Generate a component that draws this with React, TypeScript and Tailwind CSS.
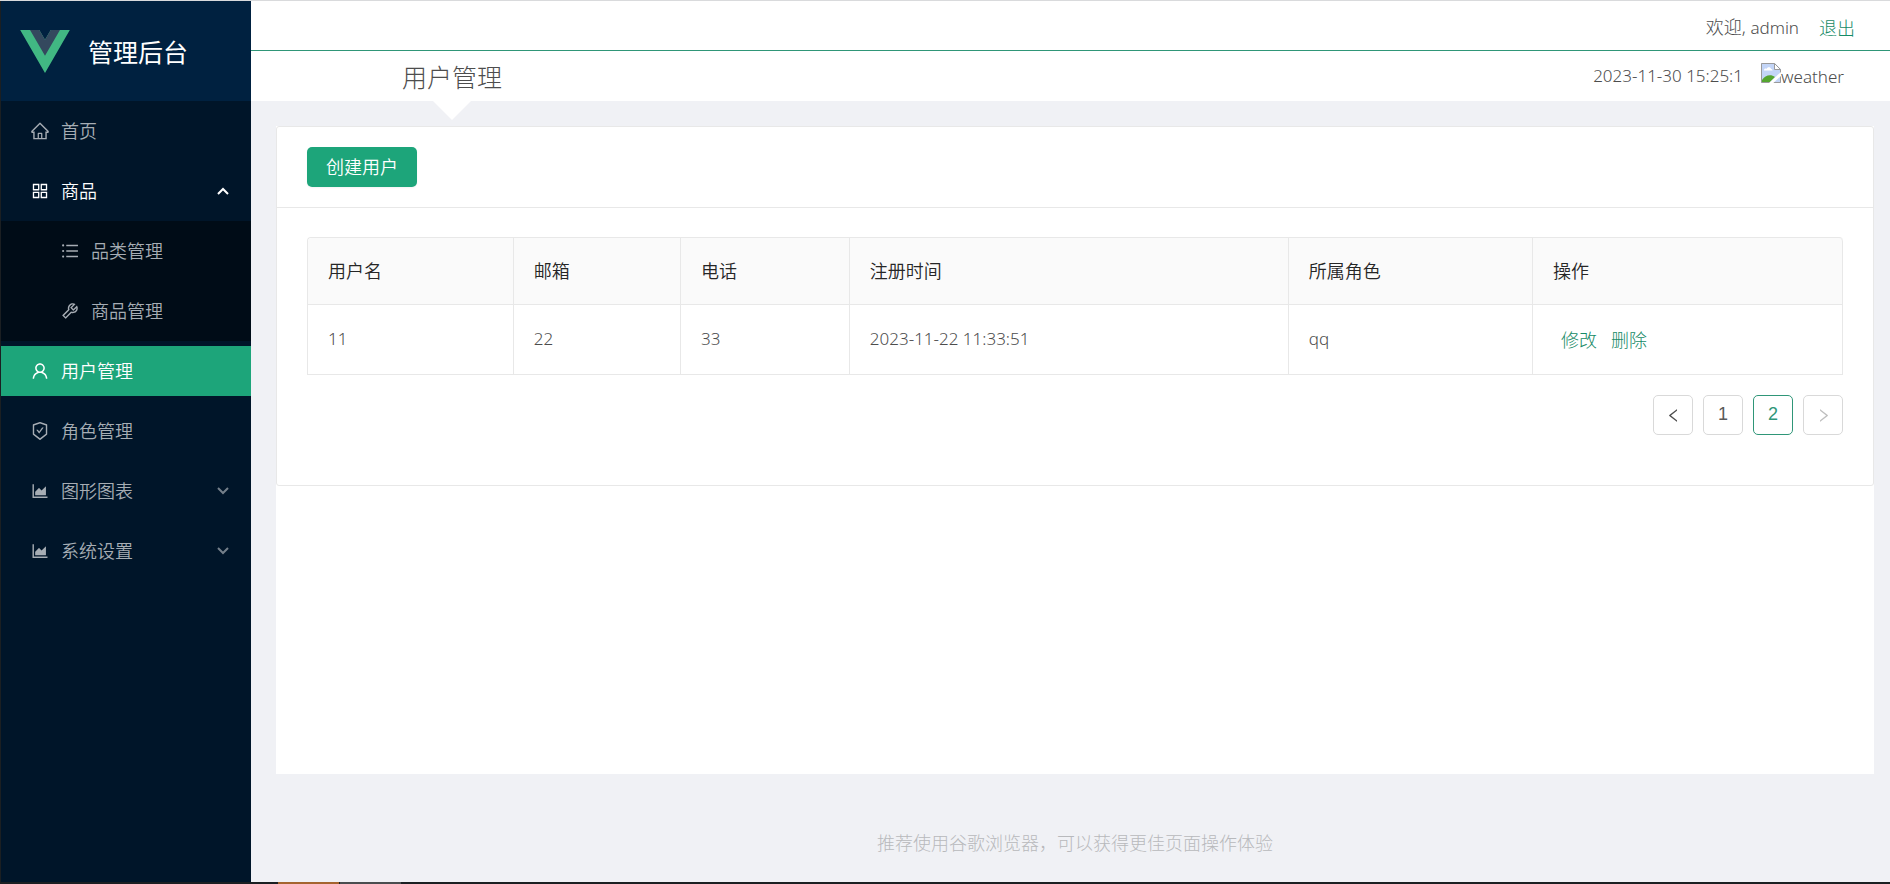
import { FC, ReactNode } from "react";
import {
  AiOutlineAppstore,
  AiOutlineAreaChart,
  AiOutlineHome,
  AiOutlineLeft,
  AiOutlineRight,
  AiOutlineSafetyCertificate,
  AiOutlineTool,
  AiOutlineUnorderedList,
  AiOutlineUser,
} from "react-icons/ai";
import clsx from "clsx";

const columns = [
  { title: "用户名", width: "w-[13.4%]" },
  { title: "邮箱", width: "w-[10.9%]" },
  { title: "电话", width: "w-[11%]" },
  { title: "注册时间", width: "w-[28.6%]" },
  { title: "所属角色", width: "w-[15.9%]" },
  { title: "操作", width: "w-[20.2%]" },
];

const users = [
  { name: "11", email: "22", phone: "33", createdAt: "2023-11-22 11:33:51", role: "qq" },
];

const Logo: FC = () => (
  <svg viewBox="0 0 262 227" className="h-[43px] w-[50px]" aria-hidden="true">
    <path fill="#41b883" d="M161 0l-30 52L101 0H0l131 227L262 0z" />
    <path fill="#34495e" d="M161 0l-30 52L101 0H52l79 136L210 0z" />
  </svg>
);

const Arrow: FC<{ open?: boolean }> = ({ open }) => (
  <svg
    viewBox="0 0 12 8"
    className={clsx("ml-auto h-2 w-3", !open && "rotate-180 opacity-70")}
    fill="none"
    stroke="currentColor"
    strokeWidth="2"
    aria-hidden="true"
  >
    <path d="M1 7l5-5 5 5" />
  </svg>
);

const BrokenImage: FC = () => (
  <svg viewBox="0 0 40 40" className="size-5" aria-hidden="true">
    <path fill="#c3d5f7" d="M0 0h28l12 12v28H0z" />
    <path fill="#fff" d="M6 15c0-4 3-5 5-3 1-5 9-5 9 0 2 0 3 1 3 3z" />
    <path fill="#55a630" d="M2 38v-4c6-10 18-12 26-6L18 38z" />
    <path fill="#fff" d="M28 0v12h12z" />
    <path fill="none" stroke="#9a9a9a" strokeWidth="2" d="M1 39V1h26l12 12v26H1M27 1v12h12" />
    <path stroke="#fff" strokeWidth="6" d="M18 42L42 20" />
  </svg>
);

type MenuItemProps = {
  icon: ReactNode;
  label: string;
  active?: boolean;
  nested?: boolean;
  open?: boolean;
};

const MenuItem: FC<MenuItemProps> = ({ icon, label, active, nested, open }) => (
  <li className="py-[5px]">
    <a
      href="#"
      className={clsx(
        "flex h-[50px] items-center gap-[11px] pr-[22px]",
        nested ? "pl-[59px]" : "pl-[29px]",
        active && "bg-[#1da57a]",
        active || open ? "text-white" : "text-[#a6adb4]"
      )}
    >
      <span className="text-xl">{icon}</span>
      <span>{label}</span>
      {open !== undefined && <Arrow open={open} />}
    </a>
  </li>
);

const Sidebar: FC = () => (
  <aside className="w-[251px] shrink-0 border-l border-[#1b1f22] bg-[#001529] font-[350]">
    <div className="flex h-[100px] items-center gap-[18px] bg-[#002140] pl-[19px] text-white">
      <Logo />
      <h1 className="pt-[2px] text-[25px] font-normal">管理后台</h1>
    </div>
    <nav>
      <ul>
        <MenuItem icon={<AiOutlineHome />} label="首页" />
        <MenuItem icon={<AiOutlineAppstore />} label="商品" open />
        <li className="bg-[#000c17]">
          <ul>
            <MenuItem icon={<AiOutlineUnorderedList />} label="品类管理" nested />
            <MenuItem icon={<AiOutlineTool />} label="商品管理" nested />
          </ul>
        </li>
        <MenuItem icon={<AiOutlineUser />} label="用户管理" active />
        <MenuItem icon={<AiOutlineSafetyCertificate />} label="角色管理" />
        <MenuItem icon={<AiOutlineAreaChart />} label="图形图表" open={false} />
        <MenuItem icon={<AiOutlineAreaChart />} label="系统设置" open={false} />
      </ul>
    </nav>
  </aside>
);

const Header: FC = () => (
  <header className="bg-white">
    <div className="flex h-[50px] items-center justify-end gap-5 border-b border-[#2f9678] pt-1 pr-[35px]">
      <span>
        欢迎, <span className="text-[17px]">admin</span>
      </span>
      <a href="#" className="text-[#168a66]">
        退出
      </a>
    </div>
    <div className="flex h-[50px] items-center justify-between pr-[46px]">
      <div className="relative flex h-full w-1/4 items-center justify-center pl-1">
        <h2 className="pt-[2px] text-[25px]">用户管理</h2>
        <span className="absolute top-full border-x-[19px] border-t-[19px] border-x-transparent border-t-white" />
      </div>
      <div className="flex items-center gap-[18px] text-[17px]">
        <time>2023-11-30 15:25:1</time>
        <span className="flex items-baseline pt-[2px]">
          <BrokenImage />
          weather
        </span>
      </div>
    </div>
  </header>
);

const UserTable: FC = () => (
  <table className="w-full table-fixed border-separate border-spacing-0 rounded-t border-t border-l border-[#e8e8e8] text-left">
    <thead>
      <tr className="h-[67px] text-[#262626]">
        {columns.map(({ title, width }) => (
          <th
            key={title}
            className={clsx(
              "border-r border-b border-[#e8e8e8] bg-[#fafafa] px-5 font-[350] first:rounded-tl last:rounded-tr",
              width
            )}
          >
            {title}
          </th>
        ))}
      </tr>
    </thead>
    <tbody>
      {users.map((user) => (
        <tr key={user.name} className="h-[70px]">
          {[user.name, user.email, user.phone, user.createdAt, user.role].map((value) => (
            <td key={value} className="border-r border-b border-[#e8e8e8] px-5 text-[17px]">
              {value}
            </td>
          ))}
          <td className="border-r border-b border-[#e8e8e8] px-7">
            <div className="flex gap-[14px] text-[#168a66]">
              <button type="button">修改</button>
              <button type="button">删除</button>
            </div>
          </td>
        </tr>
      ))}
    </tbody>
  </table>
);

const pageButton =
  "flex size-10 items-center justify-center rounded-[5px] border bg-white font-['Liberation_Sans',sans-serif] font-normal";

const Pagination: FC = () => (
  <nav className="mt-5 flex justify-end gap-[10px]">
    <button type="button" aria-label="上一页" className={clsx(pageButton, "border-[#d9d9d9]")}>
      <AiOutlineLeft className="size-[17px]" />
    </button>
    <button type="button" className={clsx(pageButton, "border-[#d9d9d9] pb-[2px] text-[#595959]")}>
      1
    </button>
    <button type="button" className={clsx(pageButton, "border-[#2f9678] pb-[2px] text-[#2f9678]")}>
      2
    </button>
    <button
      type="button"
      aria-label="下一页"
      disabled
      className={clsx(pageButton, "border-[#d9d9d9] text-[#bfbfbf]")}
    >
      <AiOutlineRight className="size-[17px]" />
    </button>
  </nav>
);

export default function App() {
  return (
    <div className="flex min-h-screen flex-col border-t border-[#d9dadc] bg-[#f0f1f5] font-['Noto_Sans','Noto_Sans_CJK_SC',sans-serif] text-lg font-light text-[#4d4d4d]">
      <div className="flex flex-1">
        <Sidebar />
        <div className="flex min-w-0 flex-1 flex-col">
          <Header />
          <main className="mt-[25px] mr-4 ml-[25px] flex-1 bg-white">
            <section className="rounded-[3px] border border-[#e8e8e8]">
              <div className="border-b border-[#e8e8e8] px-[30px] py-5">
                <button
                  type="button"
                  className="h-10 rounded-[5px] bg-[#1da57a] px-[19px] font-[350] text-white shadow-xs"
                >
                  创建用户
                </button>
              </div>
              <div className="px-[30px] pt-[29px] pb-[50px]">
                <UserTable />
                <Pagination />
              </div>
            </section>
          </main>
          <footer className="mr-4 ml-[25px] flex h-[108px] items-center justify-center pt-[29px] text-[#b8b9bc]">
            推荐使用谷歌浏览器，可以获得更佳页面操作体验
          </footer>
        </div>
      </div>
      <div className="flex h-[2px] bg-[#1b1f22] pl-[278px]">
        <span className="w-[61px] bg-[#a5642f]" />
        <span className="ml-px w-[61px] bg-[#4a4d4f]" />
      </div>
    </div>
  );
}
